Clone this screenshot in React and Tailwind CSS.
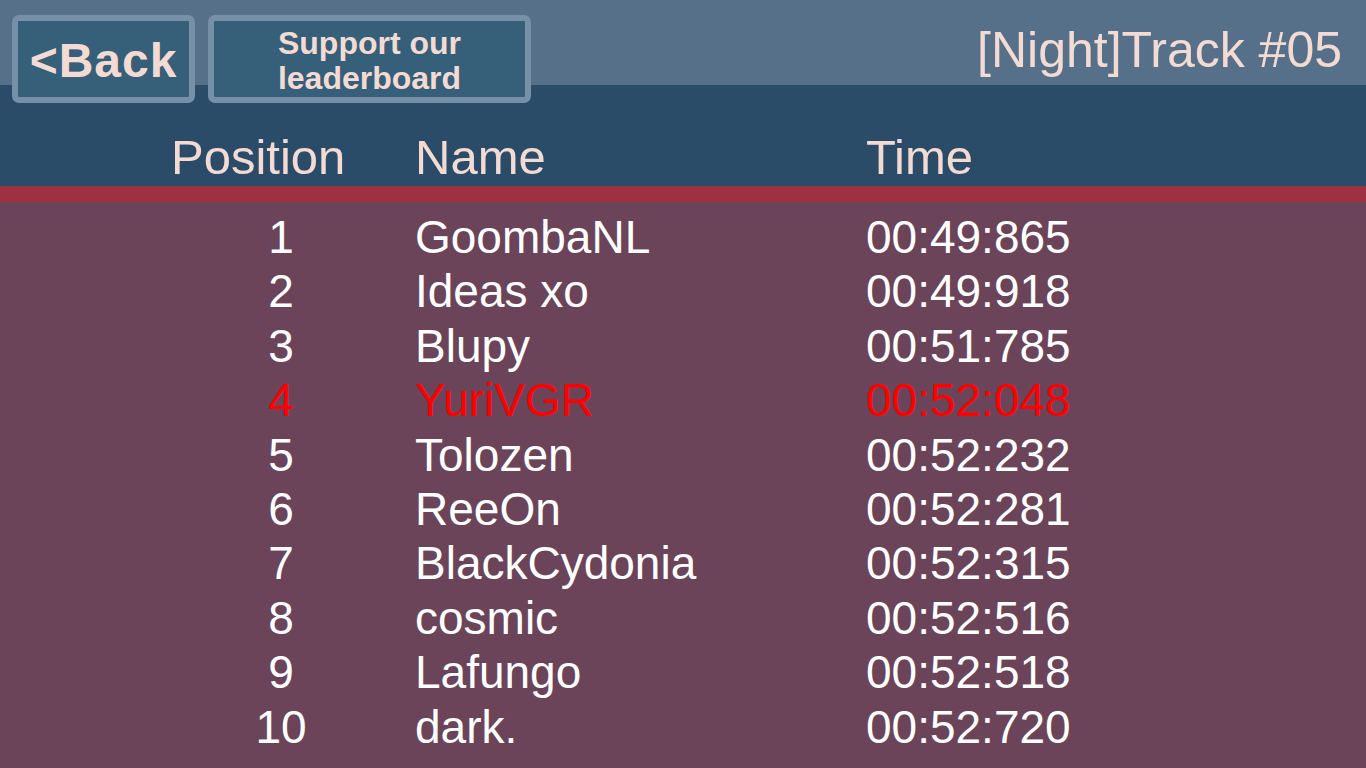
const rows = [
  ["1", "GoombaNL", "00:49:865"],
  ["2", "Ideas xo", "00:49:918"],
  ["3", "Blupy", "00:51:785"],
  ["4", "YuriVGR", "00:52:048", true],
  ["5", "Tolozen", "00:52:232"],
  ["6", "ReeOn", "00:52:281"],
  ["7", "BlackCydonia", "00:52:315"],
  ["8", "cosmic", "00:52:516"],
  ["9", "Lafungo", "00:52:518"],
  ["10", "dark.", "00:52:720"],
];

export default function App() {
  return (
    <div className="w-[1366px] h-[768px] overflow-hidden flex flex-col bg-[#6b445a] font-['Liberation_Sans',Arial,sans-serif]">
      {/* HEADER */}
      <div className="h-[186px] flex flex-col bg-[linear-gradient(#56708a_0,#56708a_85px,#2b4c69_85px,#2b4c69_100%)]">
        {/* top row */}
        <div className="flex items-start justify-between pt-[15px] pl-[12px] pr-[24px]">
          <div className="flex gap-[13px]">
            <button className="w-[183px] h-[88px] rounded-[7px] border-[6px] border-[#7690a8] bg-[#365f7a] flex items-center justify-center pt-[3px] text-[48px] font-bold tracking-[0.02em] text-[#f3dbd3] leading-none">
              &lt;Back
            </button>
            <button className="w-[323px] h-[88px] rounded-[7px] border-[6px] border-[#7690a8] bg-[#365f7a] flex flex-col items-center justify-center pt-[3px] text-[32px] font-bold text-[#f3dbd3] leading-[35px]">
              <span>Support our</span>
              <span>leaderboard</span>
            </button>
          </div>
          <div className="mt-[5px] text-[50px] leading-[60px] text-[#f3dbd3]">
            [Night]Track #05
          </div>
        </div>

        {/* column headings */}
        <div className="mt-[24px] flex pl-[171px] text-[49px] leading-[60px] text-[#f3dbd3]">
          <div className="w-[244px]">Position</div>
          <div className="w-[451px]">Name</div>
          <div>Time</div>
        </div>
      </div>

      {/* RED STRIPE */}
      <div className="h-[16px] bg-[#9d3140]" />

      {/* ROWS */}
      <div className="pt-[8px] flex flex-col">
        {rows.map(([pos, name, time, me]) => (
          <div
            key={pos}
            className={`flex pl-[231px] text-[46px] leading-[54.4px] ${me ? "text-[#ff0000]" : "text-white"}`}
          >
            <div className="w-[100px] text-center">{pos}</div>
            <div className="ml-[84px] w-[451px]">{name}</div>
            <div>{time}</div>
          </div>
        ))}
      </div>
    </div>
  );
}
